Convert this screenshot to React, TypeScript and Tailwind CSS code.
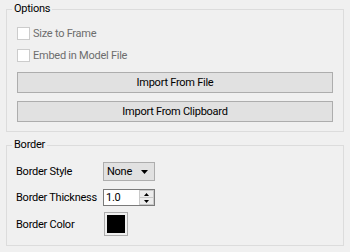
import React from "react";

function Checkbox({ label }: { label: string }) {
  return (
    <div className="flex h-[13px] items-center">
      <span className="box-border h-[13px] w-[13px] shrink-0 border border-[#cccccc] bg-white" />
      <span className="ml-[3px] leading-[13px] text-[#6d6d6d]">{label}</span>
    </div>
  );
}

function Button({ label }: { label: string }) {
  return (
    <button
      type="button"
      className="box-border flex h-[21px] w-full items-center justify-center border border-[#adadad] bg-[#e1e1e1] leading-[13px] tracking-[-0.25px] text-black"
    >
      {label}
    </button>
  );
}

export default function App() {
  return (
    <div className="box-border h-[252px] w-[350px] bg-[#f0f0f0] pl-[6px] pt-[1px] font-['Roboto',sans-serif] text-[11px] tracking-[-0.25px] text-black">
      <fieldset className="box-border h-[131px] w-[338px] border border-[#dcdcdc]">
        <legend className="ml-[5px] px-[2px] leading-[16px]">Options</legend>
        <div className="flex flex-col px-[10px] pt-[10px]">
          <Checkbox label="Size to Frame" />
          <div className="mt-[9px]">
            <Checkbox label="Embed in Model File" />
          </div>
          <div className="mt-[10px]">
            <Button label="Import From File" />
          </div>
          <div className="mt-[8px]">
            <Button label="Import From Clipboard" />
          </div>
        </div>
      </fieldset>

      <fieldset className="mt-[5px] box-border h-[109px] w-[338px] border border-[#dcdcdc]">
        <legend className="ml-[5px] px-[2px] leading-[16px]">Border</legend>
        <div className="flex flex-col pl-[9px] pt-[9px]">
          <div className="flex h-[19px] items-center">
            <span className="w-[87px] leading-[13px]">Border Style</span>
            <div className="box-border flex h-[19px] w-[52px] items-center border border-[#adadad] bg-[#e1e1e1] pl-[3px] pr-[6px]">
              <span className="flex-1 leading-[13px]">None</span>
              <svg width="7" height="4" viewBox="0 0 7 4">
                <path d="M0 0H7L3.5 4Z" fill="#000" />
              </svg>
            </div>
          </div>

          <div className="mt-[8px] flex h-[17px] items-center">
            <span className="w-[87px] leading-[13px]">Border Thickness</span>
            <div className="box-border flex h-[17px] w-[52px] border border-[#7a7a7a] bg-white">
              <span className="flex-1 pl-[2px] leading-[15px]">1.0</span>
              <div className="flex w-[15px] flex-col">
                <div className="box-border flex h-[8px] items-center justify-center border border-[#c9c9c9] bg-[#ececec]">
                  <svg width="5" height="3" viewBox="0 0 5 3">
                    <path d="M2.5 0L5 3H0Z" fill="#000" />
                  </svg>
                </div>
                <div className="box-border flex h-[7px] items-center justify-center border border-t-0 border-[#c9c9c9] bg-[#ececec]">
                  <svg width="5" height="3" viewBox="0 0 5 3">
                    <path d="M0 0H5L2.5 3Z" fill="#000" />
                  </svg>
                </div>
              </div>
            </div>
          </div>

          <div className="mt-[6px] flex h-[24px] items-center">
            <span className="w-[88px] leading-[13px]">Border Color</span>
            <div className="box-border h-[24px] w-[24px] border border-[#adadad] bg-[#f0f0f0] p-[2px]">
              <div className="h-full w-full bg-black" />
            </div>
          </div>
        </div>
      </fieldset>
    </div>
  );
}
